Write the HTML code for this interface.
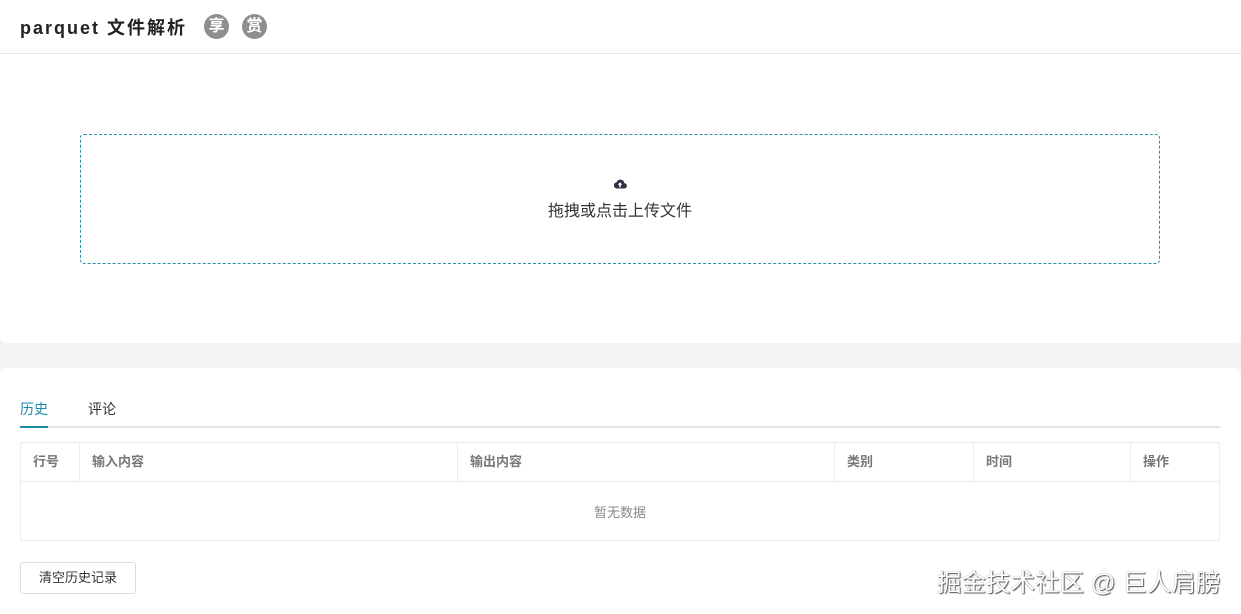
<!DOCTYPE html>
<html><head><meta charset="utf-8"><style>
body{margin:0;width:1241px;height:614px;background:#f4f4f4;font-family:"Liberation Sans","Noto Sans CJK SC",sans-serif;position:relative;overflow:hidden}
.c1{position:absolute;left:0;top:0;width:1241px;height:343px;background:#fff;border-radius:0 0 6px 6px}
.hd{position:absolute;left:0;top:0;width:1241px;height:53px;border-bottom:1px solid #e6e6e6}
.t{position:absolute;left:20px;top:14px;font-size:18px;font-weight:bold;color:#222;letter-spacing:2px}
.b{position:absolute;top:14px;width:25px;height:25px;border-radius:50%;background:#8e8e8e;color:#fff;font-size:16px;line-height:25px;text-align:center;font-weight:bold}
.up{position:absolute;left:80px;top:134px;width:1078px;height:128px;border:1px dashed #2a8fa6;border-radius:4px}
.up .tx{position:absolute;top:62px;width:100%;text-align:center;font-size:16px;color:#333}
.c2{position:absolute;left:0;top:368px;width:1241px;height:246px;background:#fff;border-radius:6px 6px 0 0}
.tab{position:absolute;top:399px;font-size:14px;color:#333}
table{position:absolute;left:20px;top:442px;width:1200px;border-collapse:collapse;font-size:13px;table-layout:fixed}
th{height:34px;border:1px solid #ececec;text-align:left;padding:0 12px 4px;color:#777;font-weight:bold;background:#fff}
td{height:58px;padding:0;border:1px solid #ececec;text-align:center;color:#888}
.btn{position:absolute;left:20px;top:562px;width:114px;height:30px;border:1px solid #dcdcdc;border-radius:3px;font-size:13px;color:#333;text-align:center;line-height:30px}
.wm{position:absolute;left:937px;top:564px;font-size:24.5px;color:#fff;text-shadow:1px 1px 1px #555,0 0 1px #777;white-space:nowrap}
</style></head><body>
<div class="c1">
<div class="hd"><div class="t">parquet 文件解析</div><div class="b" style="left:204px">享</div><div class="b" style="left:242px">赏</div></div>
<div class="up">
<svg style="position:absolute;left:532px;top:43px" width="14" height="12" viewBox="0 0 14 12"><path d="M3.5 10.5h7.5a2.7 2.7 0 0 0 .3-5.4A4 4 0 0 0 3.6 4.2 3.2 3.2 0 0 0 3.5 10.5z" fill="#2d3340"/><path d="M7 4.2l-2.3 2.5h1.5v2.5h1.6V6.7h1.5z" fill="#fff"/></svg>
<div class="tx">拖拽或点击上传文件</div></div>
</div>
<div class="c2"></div>
<div class="tab" style="left:20px;color:#1a8aa6">历史</div>
<div class="tab" style="left:88px">评论</div>
<div style="position:absolute;left:20px;top:426px;width:1200px;height:2px;background:#e4e4e4"></div>
<div style="position:absolute;left:20px;top:426px;width:28px;height:2px;background:#1a8aa6"></div>
<table><colgroup><col style="width:59px"><col style="width:378px"><col style="width:377px"><col style="width:139px"><col style="width:157px"><col></colgroup>
<tr><th>行号</th><th>输入内容</th><th>输出内容</th><th>类别</th><th>时间</th><th>操作</th></tr>
<tr><td colspan="6">暂无数据</td></tr></table>
<div class="btn">清空历史记录</div>
<div class="wm">掘金技术社区 @ 巨人肩膀</div>
</body></html>
